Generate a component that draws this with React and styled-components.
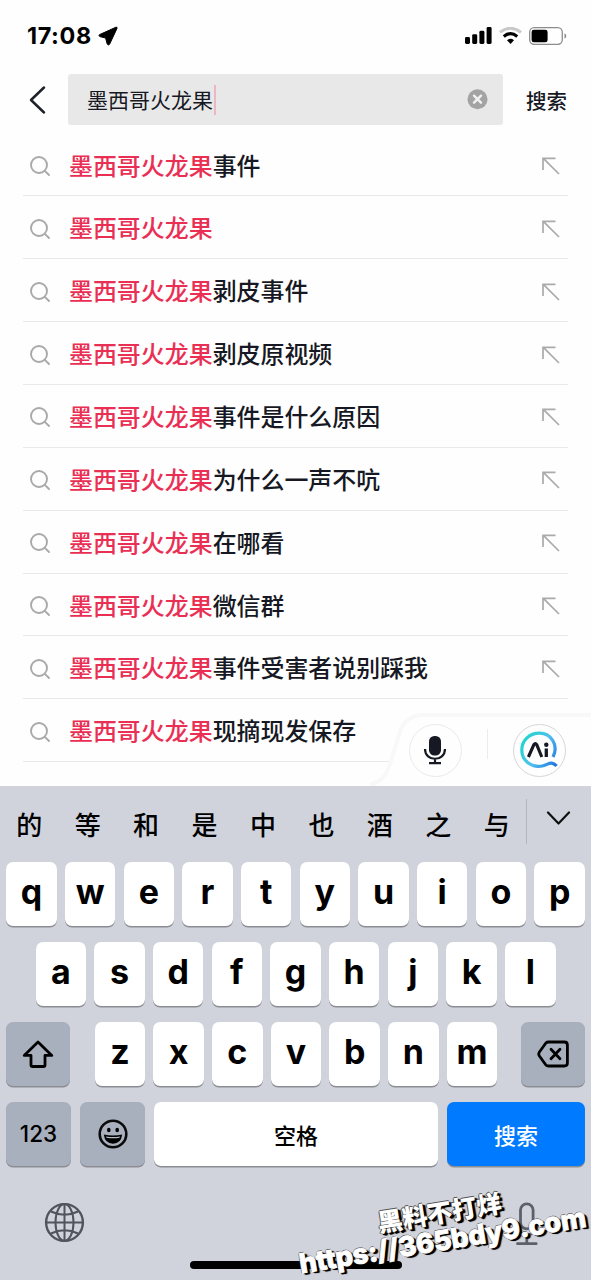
import React from "react";
import styled, { createGlobalStyle, css } from "styled-components";

const Global = createGlobalStyle`
  * { box-sizing: border-box; }
  body { margin: 0; background: #fff; }
`;

const latin = '"Inter", "Noto Sans CJK SC", sans-serif';
const cjk = '"Noto Sans CJK SC", "Inter", sans-serif';

const Screen = styled.main`
  position: relative;
  width: 591px;
  height: 1280px;
  overflow: hidden;
  display: flex;
  flex-direction: column;
  background: #fefefe;
  color: #161823;
  font-family: ${cjk};
`;

const StatusBar = styled.header`
  height: 74px;
  padding: 0 24px 3px 27px;
  display: flex;
  align-items: center;
  color: #000;
`;
const Clock = styled.span`
  font: 700 23.4px/28px ${latin};
  letter-spacing: 0.6px;
  width: 71px;
  white-space: nowrap;
`;
const StatusIcons = styled.div`
  margin-left: auto;
  display: flex;
  align-items: center;
  gap: 7px;
`;

const SearchBar = styled.div`
  height: 51px;
  display: flex;
  align-items: center;
  padding: 0 0 0 24px;
`;
const BackSlot = styled.div`
  width: 44px;
  display: flex;
`;
const Field = styled.div`
  width: 435px;
  height: 51px;
  padding: 0 15px 0 19px;
  display: flex;
  align-items: center;
  justify-content: space-between;
  background: #e8e8e8;
  border-radius: 3px;
`;
const Query = styled.span`
  font-size: 21px;
  font-weight: 400;
  padding-right: 1px;
  border-right: 2px solid #eeb6c0;
  height: 30px;
  line-height: 29px;
  white-space: nowrap;
`;
const SearchAction = styled.span`
  margin-left: 23px;
  font-size: 20.5px;
  line-height: 30px;
  font-weight: 500;
  white-space: nowrap;
`;

const Suggestions = styled.ul`
  list-style: none;
  margin: 0;
  padding: 8.6px 23px 0;
  height: 661px;
`;
const Suggestion = styled.li`
  height: 62.86px;
  padding: 0 8px 0 6px;
  display: flex;
  align-items: center;
  border-bottom: 1px solid #e9e9ea;

  svg {
    margin-top: 3px;
  }
`;
const Phrase = styled.span`
  flex: 1;
  margin-left: 18px;
  font-size: 23.95px;
  line-height: 36px;
  font-weight: 500;
  white-space: nowrap;
`;
const Match = styled.em`
  font-style: normal;
  color: #ea2f55;
`;

const Assist = styled.div`
  position: absolute;
  left: 366px;
  top: 710px;
  width: 225px;
  height: 76px;
`;
const AssistShape = styled.svg`
  position: absolute;
  inset: 0;
`;
const AssistRow = styled.div`
  position: relative;
  display: flex;
  align-items: center;
  padding: 13.5px 0 0 42.5px;
`;
const RoundButton = styled.div`
  width: 53px;
  height: 53px;
  border-radius: 50%;
  border: 1px solid ${(p) => p.$edge};
  display: grid;
  place-items: center;
`;
const AssistRule = styled.i`
  width: 1px;
  height: 30px;
  margin: -12px 25px 0 25px;
  background: #ececec;
`;

const Keyboard = styled.section`
  flex: 1;
  display: flex;
  flex-direction: column;
  background: #d0d3dc;
  color: #000;
`;
const Candidates = styled.div`
  height: 76px;
  display: flex;
  align-items: center;
`;
const Candidate = styled.span`
  width: 58.45px;
  text-align: center;
  font-size: 26px;
  line-height: 38px;
  font-weight: 500;
`;
const CandidateRule = styled.i`
  width: 1px;
  height: 45px;
  margin: -6px 19px 0 0;
  background: #b2b5bd;
`;
const Keys = styled.div`
  display: flex;
  flex-direction: column;
  gap: 15px;
`;
const KeyRow = styled.div`
  height: 65px;
  display: flex;
  justify-content: ${(p) => (p.$spread ? "space-between" : "center")};
  gap: 8.2px;
  padding: 0 6px;
`;
const Letters = styled.div`
  display: flex;
  gap: 8.2px;
  margin-left: 1px;
`;
const Key = styled.div`
  flex: none;
  width: ${(p) => p.$w || 50.5}px;
  height: 64px;
  border-radius: 7px;
  display: flex;
  align-items: center;
  justify-content: center;
  background: #fff;
  box-shadow: 0 1.5px 0 #8b8d92;
  font: 700 34px/40px ${latin};
  padding-bottom: 4px;
  ${(p) => p.$tone === "grey" && css`background: #a9b0bd; padding-bottom: 0;`}
  ${(p) => p.$tone === "blue" && css`background: #007aff; color: #fff;`}
  ${(p) => p.$label && css`font: 500 ${p.$label}px/32px ${latin}; padding-bottom: 0; padding-top: ${p.$drop || 0}px;`}
`;
const Footer = styled.div`
  padding: 35px 50px 0 44px;
  display: flex;
  align-items: flex-start;
  justify-content: space-between;
`;
const HomeIndicator = styled.i`
  width: 212px;
  height: 8px;
  margin: auto auto 11px 190px;
  border-radius: 4px;
  background: #000;
`;

const Stamp = styled.div`
  position: absolute;
  left: 295px;
  top: 1197px;
  width: 294px;
  transform: rotate(-9.3deg);
  color: #fff;
  font-family: ${latin};
  font-weight: 800;
  white-space: nowrap;
  text-shadow: -1px 0 0 #555, 0 -1px 0 #555, 1px 1px 0 #000, 2px 2px 0 #000, 3px 2px 1px #000;
`;
const StampTitle = styled.div`
  font: 900 25px/29px ${cjk};
  padding-left: 84px;
`;
const StampLink = styled.div`
  font-size: 27.4px;
  letter-spacing: -0.2px;
  line-height: 28px;
  -webkit-text-stroke: 0.8px #fff;
`;

const SearchIcon = () => (
  <svg width="22" height="22" viewBox="0 0 22 22" fill="none" stroke="#a9a9ab" strokeWidth="1.9" strokeLinecap="round">
    <circle cx="10" cy="10" r="8" />
    <path d="M15.8 15.8 20 20" />
  </svg>
);
const FillIcon = () => (
  <svg width="18" height="18" viewBox="0 0 18 18" fill="none" stroke="#aaaaac" strokeWidth="1.7">
    <path d="M1 13V1.3H13.5M1.3 1.3 17 17" />
  </svg>
);

const items = [
  "事件", "", "剥皮事件", "剥皮原视频", "事件是什么原因",
  "为什么一声不吭", "在哪看", "微信群", "事件受害者说别踩我", "现摘现发保存",
];

export default function App() {
  return (
    <Screen>
      <Global />
      <StatusBar>
        <Clock>17:08</Clock>
        <svg width="20" height="20" viewBox="0 0 20 20">
          <path d="M18 1.2 1.6 8.6Q.2 9.8 1.8 10.6L7.6 12 9.2 18Q10.4 19.8 11.6 18.2L19 2.4Q19.4.8 18 1.2Z" stroke="#000" strokeWidth="1" strokeLinejoin="round" />
        </svg>
        <StatusIcons>
          <svg width="27" height="17" viewBox="0 0 27 17">
            <rect x="0" y="10" width="5" height="7" rx="1.4" />
            <rect x="7.2" y="7.2" width="5" height="9.8" rx="1.4" />
            <rect x="14.4" y="3.8" width="5" height="13.2" rx="1.4" />
            <rect x="21.6" y="0" width="5" height="17" rx="1.4" />
          </svg>
          <svg width="23" height="17" viewBox="0 0 23 17" fill="none">
            <path d="M1 5.2Q11.5-2.6 22 5.2" stroke="#c8c8c8" strokeWidth="3" />
            <path d="M4.8 9.4Q11.5 4 18.2 9.4" stroke="#000" strokeWidth="3.2" />
            <path d="M8 13.2Q11.5 10.3 15 13.2L11.5 17Z" fill="#000" />
          </svg>
          <svg width="38" height="18" viewBox="0 0 38 18">
            <rect x=".7" y=".7" width="32.6" height="16.6" rx="4.5" fill="none" stroke="#8d8d8d" strokeWidth="1.3" />
            <rect x="2.6" y="2.7" width="16" height="12.6" rx="2.3" />
            <path d="M35.5 6.2Q37.3 7.2 37.3 9T35.5 11.8Z" fill="#888" />
          </svg>
        </StatusIcons>
      </StatusBar>

      <SearchBar>
        <BackSlot>
          <svg width="24" height="30" viewBox="0 0 24 30" fill="none" stroke="#202229" strokeWidth="2.5" strokeLinejoin="round" strokeLinecap="round">
            <path d="M20 2.5 7 15 20 27.5" />
          </svg>
        </BackSlot>
        <Field>
          <Query>墨西哥火龙果</Query>
          <svg width="21" height="21" viewBox="0 0 21 21">
            <circle cx="10.5" cy="10.2" r="10" fill="#a3a3a3" />
            <path d="M7 6.7l7 7m0-7l-7 7" stroke="#f1f1f1" strokeWidth="2.4" strokeLinecap="round" />
          </svg>
        </Field>
        <SearchAction>搜索</SearchAction>
      </SearchBar>

      <Suggestions>
        {items.map((rest, i) => (
          <Suggestion key={i}>
            <SearchIcon />
            <Phrase><Match>墨西哥火龙果</Match>{rest}</Phrase>
            {i < 9 && <FillIcon />}
          </Suggestion>
        ))}
      </Suggestions>

      <Assist>
        <AssistShape width="225" height="76" viewBox="0 0 225 76">
          <path d="M4 76C15 71 20 67 24 54L33 25Q38 5 58 5H226V76Z" fill="#fefefe" />
          <path d="M4 75C15 71 20 67 24 54L33 25Q38 5 58 5H226" fill="none" stroke="#f8f8f8" strokeWidth="4" />
        </AssistShape>
        <AssistRow>
          <RoundButton $edge="#eaeaea">
            <svg width="24" height="30" viewBox="0 0 24 30" fill="none" stroke="#161823" strokeWidth="2.2">
              <rect x="6" y="1" width="12" height="19.6" rx="5.4" fill="#161823" stroke="none" />
              <path d="M2 14C2 27 22 27 22 14M12 23.5V28M6 28.2H18" />
            </svg>
          </RoundButton>
          <AssistRule />
          <RoundButton $edge="#d6d6d6">
            <svg width="40" height="40" viewBox="0 0 40 40" fill="none">
              <defs>
                <linearGradient id="ring" x1="0" y1=".3" x2="1" y2=".9">
                  <stop offset="0" stopColor="#25d3cf" />
                  <stop offset=".5" stopColor="#4fc0ef" />
                  <stop offset="1" stopColor="#2277df" />
                </linearGradient>
              </defs>
              <path d="M34 27C40 15 32 3.2 20.5 3.2C10 3.2 2.8 11 2.8 20C2.8 31 13 38.5 24 35.8C30 34 32.5 30.5 37.6 36" stroke="url(#ring)" strokeWidth="3.2" />
              <path d="M9.4 27 14.9 14.6Q16.3 12.6 17.7 14.6L22.8 27" stroke="#161823" strokeWidth="3.1" />
              <path d="M27.3 18.5V27" stroke="#161823" strokeWidth="3.3" />
              <circle cx="27.3" cy="14.8" r="2.2" fill="#161823" />
            </svg>
          </RoundButton>
        </AssistRow>
      </Assist>

      <Keyboard>
        <Candidates>
          {[..."的等和是中也酒之与"].map((c) => <Candidate key={c}>{c}</Candidate>)}
          <CandidateRule />
          <svg width="25" height="26" viewBox="0 0 25 26" fill="none" stroke="#111" strokeWidth="2.2" strokeLinecap="round" strokeLinejoin="round">
            <path d="M2 1.5 12.5 12.5 23 1.5" />
          </svg>
        </Candidates>
        <Keys>
          <KeyRow>{[..."qwertyuiop"].map((c) => <Key key={c}>{c}</Key>)}</KeyRow>
          <KeyRow>{[..."asdfghjkl"].map((c) => <Key key={c}>{c}</Key>)}</KeyRow>
          <KeyRow $spread>
            <Key $w={64} $tone="grey">
              <svg width="32" height="28" viewBox="0 0 32 28" fill="none" stroke="#000" strokeWidth="2.8" strokeLinejoin="round">
                <path d="M16 2 29.8 15.4H23V25Q23 26.5 21.5 26.5H10.5Q9 26.5 9 25V15.4H2.2Z" />
              </svg>
            </Key>
            <Letters>{[..."zxcvbnm"].map((c) => <Key key={c}>{c}</Key>)}</Letters>
            <Key $w={64} $tone="grey">
              <svg width="32" height="28" viewBox="0 0 32 28" fill="none" stroke="#000" strokeWidth="2.8" strokeLinejoin="round" strokeLinecap="round">
                <path d="M12 2H28Q31 2 31 5V23Q31 26 28 26H12Q10.5 26 9.5 25L3 16Q1.7 14 3 12L9.5 3Q10.5 2 12 2Z" transform="translate(-.6 0)" />
                <path d="M14 9.3l9 9.4m0-9.4l-9 9.4" />
              </svg>
            </Key>
          </KeyRow>
          <KeyRow $spread>
            <Key $w={65} $tone="grey" $label={22.5}>123</Key>
            <Key $w={65} $tone="grey">
              <svg width="30" height="30" viewBox="0 0 30 30">
                <circle cx="15" cy="15" r="13.3" fill="none" stroke="#0a0a0a" strokeWidth="2.6" />
                <ellipse cx="10.8" cy="11" rx="1.8" ry="2.2" />
                <ellipse cx="19.2" cy="11" rx="1.8" ry="2.2" />
                <path d="M5.8 15.6Q15 17.4 24.2 15.6Q23 24.8 15 24.8T5.8 15.6Z" />
                <path d="M8 17.4Q15 18.6 22 17.4L21.5 18.7Q15 20 8.5 18.7Z" fill="#b4bac6" />
              </svg>
            </Key>
            <Key $w={284} $label={22} $drop={4}>空格</Key>
            <Key $w={138} $tone="blue" $label={22} $drop={4}>搜索</Key>
          </KeyRow>
        </Keys>
        <Footer>
          <svg width="41" height="41" viewBox="0 0 41 41" fill="none" stroke="#50545d" strokeWidth="2">
            <circle cx="20.5" cy="20.5" r="18.4" strokeWidth="2.4" />
            <ellipse cx="20.5" cy="20.5" rx="9" ry="18.4" />
            <path d="M20.5 2V39M2 20.5H39M7 9.5Q20.5 16 34 9.5M7 31.5Q20.5 25 34 31.5" />
          </svg>
          <svg width="28" height="44" viewBox="0 0 28 44" fill="none" stroke="#5b6069" strokeWidth="2.8" strokeLinecap="round">
            <rect x="7.5" y="1.8" width="12.6" height="25" rx="6.3" />
            <path d="M2.5 20C2.5 37 25.1 37 25.1 20M13.8 33.5V41.5M4.5 41.7H23.2" />
          </svg>
        </Footer>
        <HomeIndicator />
      </Keyboard>

      <Stamp>
        <StampTitle>黑料不打烊</StampTitle>
        <StampLink>https://365bdy9.com</StampLink>
      </Stamp>
    </Screen>
  );
}
